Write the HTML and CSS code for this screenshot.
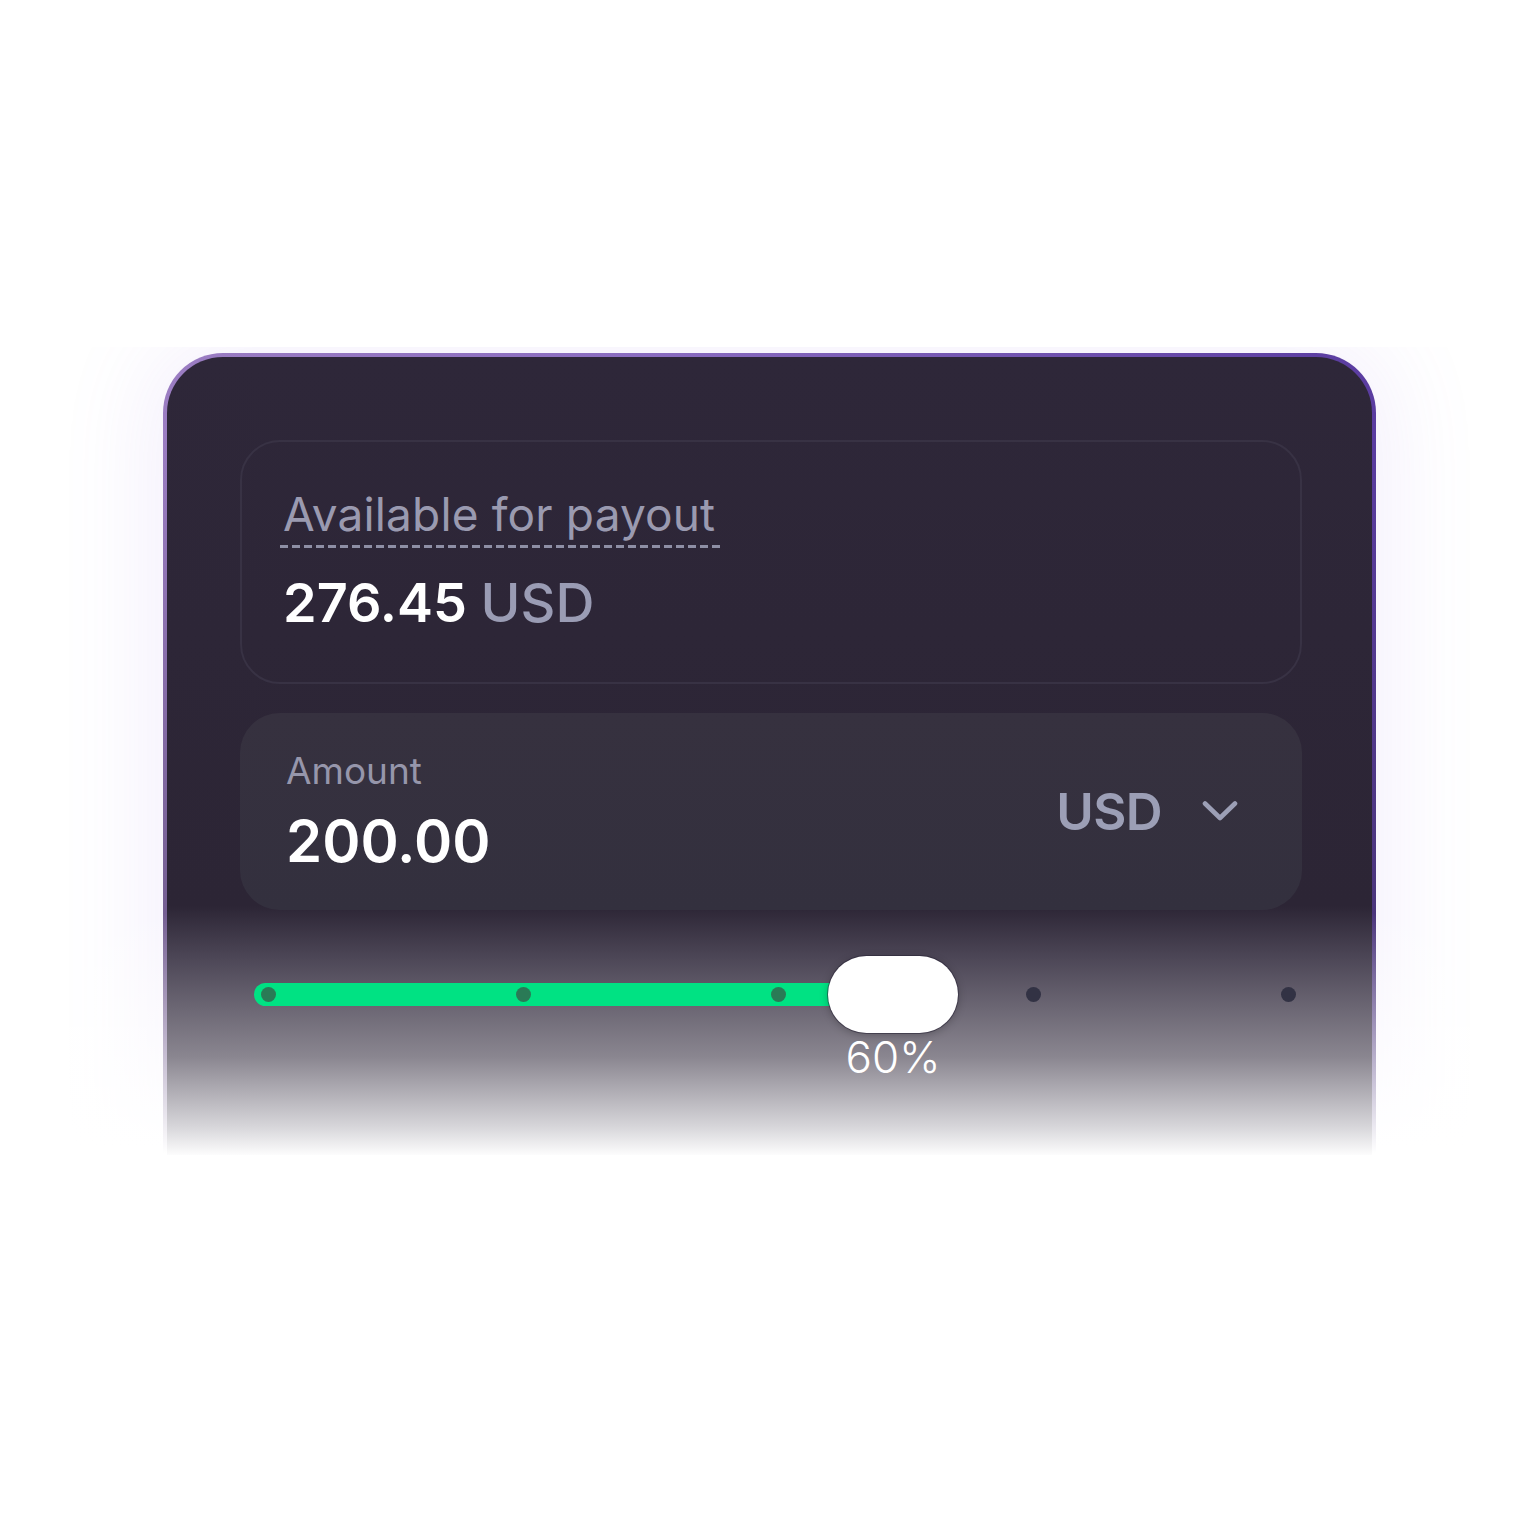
FILE: index.html
```html
<!DOCTYPE html>
<html lang="en">
<head>
<meta charset="utf-8">
<title>Payout</title>
<link rel="stylesheet" href="styles.css">
</head>
<body>
<div class="stage">
  <div class="card">
    <div class="balance">
      <div class="label"><span class="dotted">Available for payout</span></div>
      <div class="balance-value"><span class="num">276.45</span> <span class="cur">USD</span></div>
    </div>
    <div class="amount">
      <div class="amount-left">
        <div class="amount-label">Amount</div>
        <div class="amount-value">200.00</div>
      </div>
      <div class="currency">
        <span>USD</span>
        <svg class="chev" width="36" height="22" viewBox="0 0 36 22"><path d="M3 3.5 L18 18 L33 3.5" fill="none" stroke="currentColor" stroke-width="4.6" stroke-linecap="round" stroke-linejoin="round"/></svg>
      </div>
    </div>
    <div class="slider">
      <div class="track">
        <div class="fill" style="width:640px"></div>
        <span class="dot on"></span>
        <span class="dot on"></span>
        <span class="dot on"></span>
        <span class="dot"></span>
        <span class="dot"></span>
      </div>
      <div class="thumb" style="left:574px">
        <span class="pct">60%</span>
      </div>
    </div>
  </div>
</div>
</body>
</html>
```

FILE: styles.css
```css
html, body {
  margin: 0;
  background: #ffffff;
}
body {
  font-family: Inter, "Noto Sans", "Liberation Sans", sans-serif;
  width: 1536px;
  height: 1536px;
  overflow: hidden;
}
.stage {
  position: relative;
  margin-top: 347px;
  height: 813px;
  padding-top: 6px;
  box-sizing: border-box;
  overflow: hidden;
}
.stage::before {
  content: "";
  position: absolute;
  left: 163px;
  top: 6px;
  width: 1213px;
  height: 802px;
  border-radius: 60px 60px 0 0;
  box-shadow: 0 0 90px 16px rgba(150, 110, 230, 0.10);
}
.stage::after {
  content: "";
  position: absolute;
  left: 0;
  right: 0;
  top: 560px;
  bottom: 0;
  background: linear-gradient(to bottom, rgba(255,255,255,0), #ffffff 95%);
}
.card {
  position: relative;
  z-index: 1;
  margin-left: 163px;
  width: 1213px;
  height: 802px;
  box-sizing: border-box;
  border: 4px solid transparent;
  border-bottom: 0;
  border-radius: 60px 60px 0 0;
  padding: 83px 70px 0 73px;
  background:
    linear-gradient(to bottom, #2e2739 0, #2c2535 549px, #4c4656 600px, #8a8690 700px, #d7d6da 770px, #ffffff 800px) padding-box,
    linear-gradient(to bottom, rgba(255,255,255,0) 0, rgba(255,255,255,0) 560px, #ffffff 800px) border-box,
    linear-gradient(to bottom, rgba(46,39,57,0) 0, rgba(46,39,57,0) 80px, rgba(46,39,57,0.35) 560px) border-box,
    linear-gradient(to right, #9b7dc2 0, #8a6cc0 40%, #5a3ca0 100%) border-box;
}
.balance {
  height: 244px;
  box-sizing: border-box;
  border: 2px solid #383244;
  border-radius: 40px;
  padding: 44px 41px 0;
}
.label {
  font-size: 46px;
  line-height: 56px;
  color: #9a9ab0;
  font-weight: 400;
  letter-spacing: 0.15px;
}
.dotted {
  display: inline-block;
  margin-left: -3px;
  padding: 0 6px 6px 3px;
  background-image: repeating-linear-gradient(to right, #8e8fa5 0 8px, transparent 8px 12px);
  background-position: left bottom;
  background-size: 100% 3px;
  background-repeat: no-repeat;
}
.balance-value {
  margin-top: 23px;
  font-size: 54px;
  line-height: 64px;
  font-weight: 600;
  color: #ffffff;
}
.balance-value .cur {
  color: #9a9cb4;
  font-weight: 500;
}
.amount {
  margin-top: 29px;
  height: 197px;
  box-sizing: border-box;
  border-radius: 40px;
  background: linear-gradient(to bottom, #36313f, #33303e);
  padding: 0 64px 0 46px;
  display: flex;
  justify-content: space-between;
  align-items: center;
}
.amount-left {
  align-self: flex-start;
  padding-top: 36px;
}
.amount-label {
  font-size: 37px;
  line-height: 44px;
  color: #9696ab;
}
.amount-value {
  margin-top: 13px;
  font-size: 58px;
  line-height: 70px;
  font-weight: 600;
  color: #ffffff;
}
.currency {
  display: flex;
  align-items: center;
  gap: 40px;
  font-size: 51px;
  line-height: 1.21;
  font-weight: 600;
  letter-spacing: -0.6px;
  color: #9c9fb6;
}
.chev {
  display: block;
  color: #9c9fb6;
}
.slider {
  position: relative;
  height: 77px;
  margin: 46px 0 0 14px;
}
.track {
  position: relative;
  top: 27px;
  height: 23px;
  padding: 0 6.5px;
  display: flex;
  justify-content: space-between;
  align-items: center;
}
.fill {
  position: absolute;
  left: 0;
  top: 0;
  height: 23px;
  border-radius: 12px;
  background: #00e283;
}
.dot {
  position: relative;
  width: 15px;
  height: 15px;
  border-radius: 50%;
  background: #323244;
}
.dot.on {
  background: #2a7a56;
}
.thumb {
  position: absolute;
  top: 0;
  width: 130px;
  height: 77px;
  border-radius: 39px;
  background: #ffffff;
  box-shadow: 0 0 0 1px rgba(40, 35, 55, 0.55), 0 2px 8px rgba(0, 0, 0, 0.25);
}
.pct {
  position: absolute;
  left: 50%;
  top: 75px;
  transform: translateX(-50%);
  font-size: 44px;
  line-height: 53px;
  font-weight: 300;
  color: #ffffff;
  white-space: nowrap;
}
```
